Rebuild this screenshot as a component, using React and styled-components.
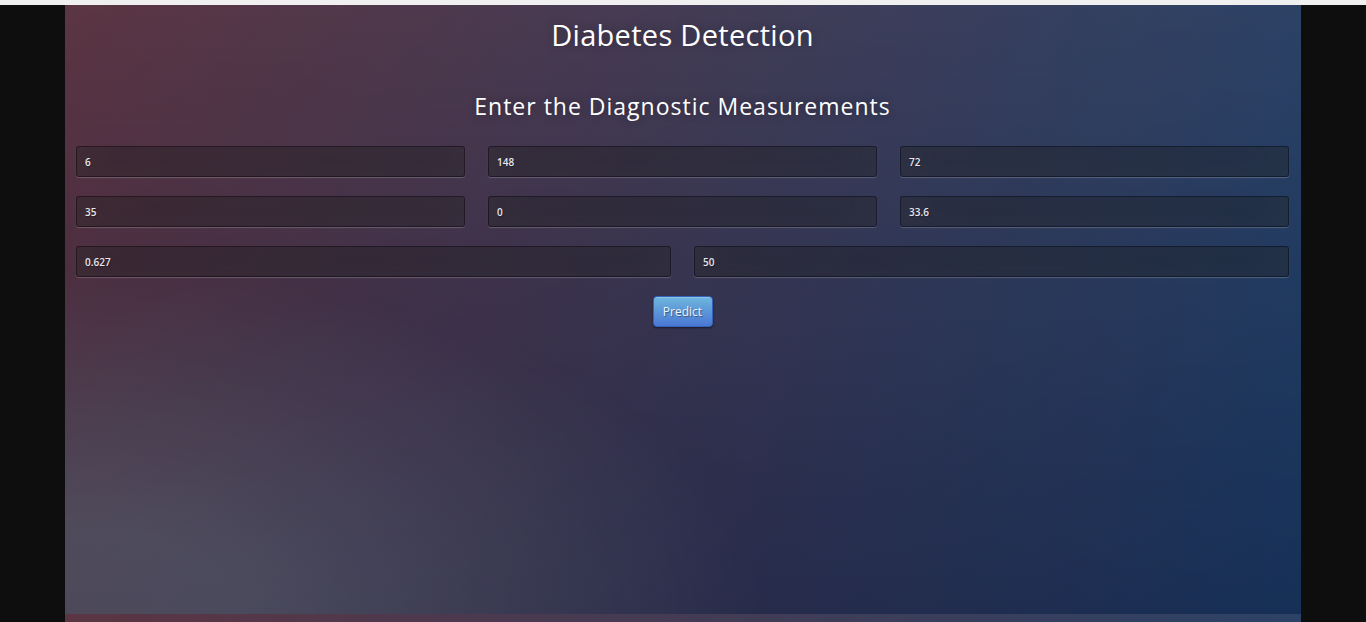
import React from 'react';
import styled, { createGlobalStyle } from 'styled-components';

const GlobalStyle = createGlobalStyle`
  html, body {
    margin: 0;
    padding: 0;
    background: #0e0e0e;
    font-family: 'Open Sans', 'Liberation Sans', sans-serif;
  }
  * { box-sizing: border-box; }
`;

// thin light strip above the page (browser chrome edge)
const TopEdge = styled.div`
  height: 5px;
  background: #f0f0f0;
`;

// main coloured area, gradient tiles every 609px
const Panel = styled.main`
  width: 1236px;
  height: 617px;
  margin: 0 auto;
  padding: 10px 12px 0 11px;
  background-color: #092756;
  background-image:
    radial-gradient(ellipse farthest-corner at 0% 100%, rgba(104, 128, 138, 0.4) 10%, rgba(138, 114, 76, 0) 40%),
    linear-gradient(to bottom, rgba(57, 173, 219, 0.25) 0%, rgba(42, 60, 87, 0.4) 100%),
    linear-gradient(135deg, #670d10 0%, #092756 100%);
  background-size: 100% 609px;
  background-repeat: repeat-y;
  overflow: hidden;
`;

const Title = styled.h1`
  margin: 0;
  text-align: center;
  color: #fff;
  font-size: 29px;
  font-weight: 400;
  line-height: 39px;
  letter-spacing: 0.3px;
  text-shadow: 0 0 10px rgba(0, 0, 0, 0.3);
`;

const Subtitle = styled.h2`
  margin: 37px 0 0;
  text-align: center;
  color: #fff;
  font-size: 23px;
  font-weight: 400;
  line-height: 31px;
  letter-spacing: 1px;
  text-shadow: 0 0 10px rgba(0, 0, 0, 0.3);
`;

const Form = styled.form`
  margin-top: 24px;
  display: flex;
  flex-direction: column;
  gap: 19px;
`;

const Row = styled.div`
  display: grid;
  grid-template-columns: repeat(${(p) => p.cols}, 1fr);
  column-gap: 23px;
`;

const Field = styled.input`
  width: 100%;
  height: 31px;
  padding: 0 8px;
  font-family: 'Open Sans', 'Liberation Sans', sans-serif;
  font-size: 10px;
  font-weight: 600;
  color: #e6e6ee;
  text-shadow: 1px 1px 1px rgba(0, 0, 0, 0.3);
  background: rgba(0, 0, 0, 0.3);
  border: 1px solid rgba(0, 0, 0, 0.3);
  border-radius: 3px;
  outline: none;
  box-shadow: inset 0 -5px 45px rgba(100, 100, 100, 0.2), 0 1px 1px rgba(255, 255, 255, 0.2);
`;

const Actions = styled.div`
  display: flex;
  justify-content: center;
`;

const PredictButton = styled.button`
  width: 60px;
  height: 31px;
  padding: 0;
  font-family: 'Open Sans', 'Liberation Sans', sans-serif;
  font-size: 12px;
  color: #eef2fa;
  text-shadow: 1px 1px 1px rgba(0, 0, 0, 0.4);
  background-color: #4a77d4;
  background-image: linear-gradient(to bottom, #6eb6de, #4a77d4);
  border: 1px solid #3762bc;
  border-radius: 4px;
  box-shadow: inset 0 1px 0 rgba(255, 255, 255, 0.2), 0 1px 2px rgba(0, 0, 0, 0.5);
  cursor: pointer;
`;

const rows = [
  ['6', '148', '72'],
  ['35', '0', '33.6'],
  ['0.627', '50'],
];

export default function App() {
  return (
    <>
      <GlobalStyle />
      <TopEdge />
      <Panel>
        <Title>Diabetes Detection</Title>
        <Subtitle>Enter the Diagnostic Measurements</Subtitle>
        <Form onSubmit={(e) => e.preventDefault()}>
          {rows.map((vals, i) => (
            <Row key={i} cols={vals.length}>
              {vals.map((v, j) => (
                <Field key={j} type="text" defaultValue={v} />
              ))}
            </Row>
          ))}
          <Actions>
            <PredictButton type="submit">Predict</PredictButton>
          </Actions>
        </Form>
      </Panel>
    </>
  );
}
